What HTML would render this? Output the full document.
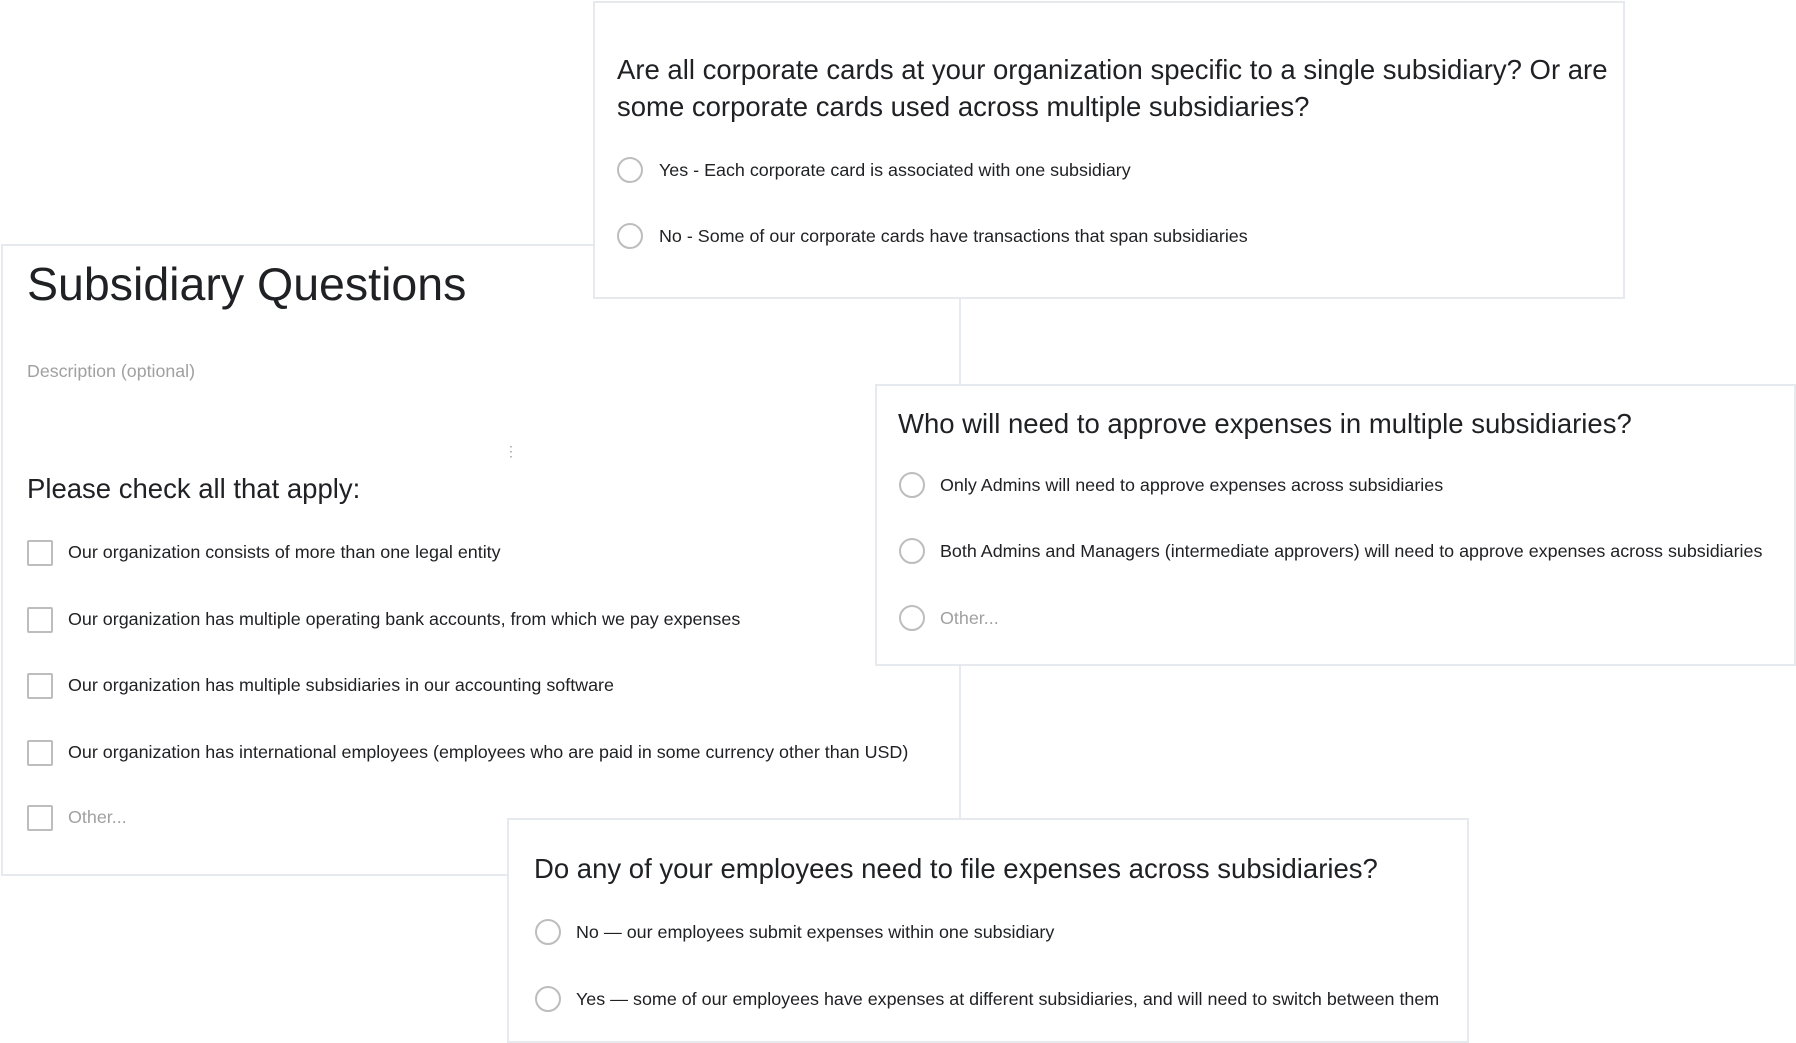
<!DOCTYPE html>
<html><head><meta charset="utf-8"><style>
*{margin:0;padding:0;box-sizing:border-box}
body{width:1796px;height:1042px;background:#fff;position:relative;overflow:hidden;font-family:"Liberation Sans",sans-serif;color:#202124}
.card{position:absolute;background:#fff;border:2px solid #e6e9ee}
.t{position:absolute;white-space:nowrap;line-height:1}
.q{font-size:27.5px}
.o{font-size:17.9px}
.r{position:absolute;width:26px;height:26px;border:2px solid #bdbdbd;border-radius:50%}
.c{position:absolute;width:26px;height:26px;border:2px solid #bdbdbd;border-radius:2px}
.g{color:#a0a0a0}
</style></head><body>
<div class="card" style="left:1px;top:244px;width:960px;height:632px;z-index:1">
</div>
<div class="t" style="left:27px;top:261px;font-size:46.5px;z-index:2">Subsidiary Questions</div>
<div class="t g" style="left:27px;top:363px;font-size:17.8px;z-index:2">Description (optional)</div>
<div class="t g" style="left:504px;top:444px;font-size:14px;z-index:2">⋮</div>
<div class="t q" style="left:27px;top:475px;z-index:2">Please check all that apply:</div>
<div style="z-index:2;position:absolute;left:0;top:0">
<div class="c" style="left:27px;top:540px"></div><div class="t o" style="left:68px;top:544px">Our organization consists of more than one legal entity</div>
<div class="c" style="left:27px;top:607px"></div><div class="t o" style="left:68px;top:611px">Our organization has multiple operating bank accounts, from which we pay expenses</div>
<div class="c" style="left:27px;top:673px"></div><div class="t o" style="left:68px;top:677px">Our organization has multiple subsidiaries in our accounting software</div>
<div class="c" style="left:27px;top:740px"></div><div class="t o" style="left:68px;top:744px">Our organization has international employees (employees who are paid in some currency other than USD)</div>
<div class="c" style="left:27px;top:805px"></div><div class="t o g" style="left:68px;top:809px">Other...</div>
</div>

<div class="card" style="left:593px;top:1px;width:1032px;height:298px;z-index:3">
<div class="t q" style="left:22px;top:53px">Are all corporate cards at your organization specific to a single subsidiary? Or are</div>
<div class="t q" style="left:22px;top:90px">some corporate cards used across multiple subsidiaries?</div>
<div class="r" style="left:22px;top:154px"></div><div class="t o" style="left:64px;top:159px">Yes - Each corporate card is associated with one subsidiary</div>
<div class="r" style="left:22px;top:220px"></div><div class="t o" style="left:64px;top:225px">No - Some of our corporate cards have transactions that span subsidiaries</div>
</div>

<div class="card" style="left:875px;top:384px;width:921px;height:282px;z-index:3">
<div class="t q" style="left:21px;top:24px">Who will need to approve expenses in multiple subsidiaries?</div>
<div class="r" style="left:22px;top:86px"></div><div class="t o" style="left:63px;top:91px">Only Admins will need to approve expenses across subsidiaries</div>
<div class="r" style="left:22px;top:152px"></div><div class="t o" style="left:63px;top:157px">Both Admins and Managers (intermediate approvers) will need to approve expenses across subsidiaries</div>
<div class="r" style="left:22px;top:219px"></div><div class="t o g" style="left:63px;top:224px">Other...</div>
</div>

<div class="card" style="left:507px;top:818px;width:962px;height:225px;z-index:3">
<div class="t q" style="left:25px;top:35px">Do any of your employees need to file expenses across subsidiaries?</div>
<div class="r" style="left:26px;top:99px"></div><div class="t o" style="left:67px;top:104px">No — our employees submit expenses within one subsidiary</div>
<div class="r" style="left:26px;top:166px"></div><div class="t o" style="left:67px;top:171px">Yes — some of our employees have expenses at different subsidiaries, and will need to switch between them</div>
</div>
</body></html>
